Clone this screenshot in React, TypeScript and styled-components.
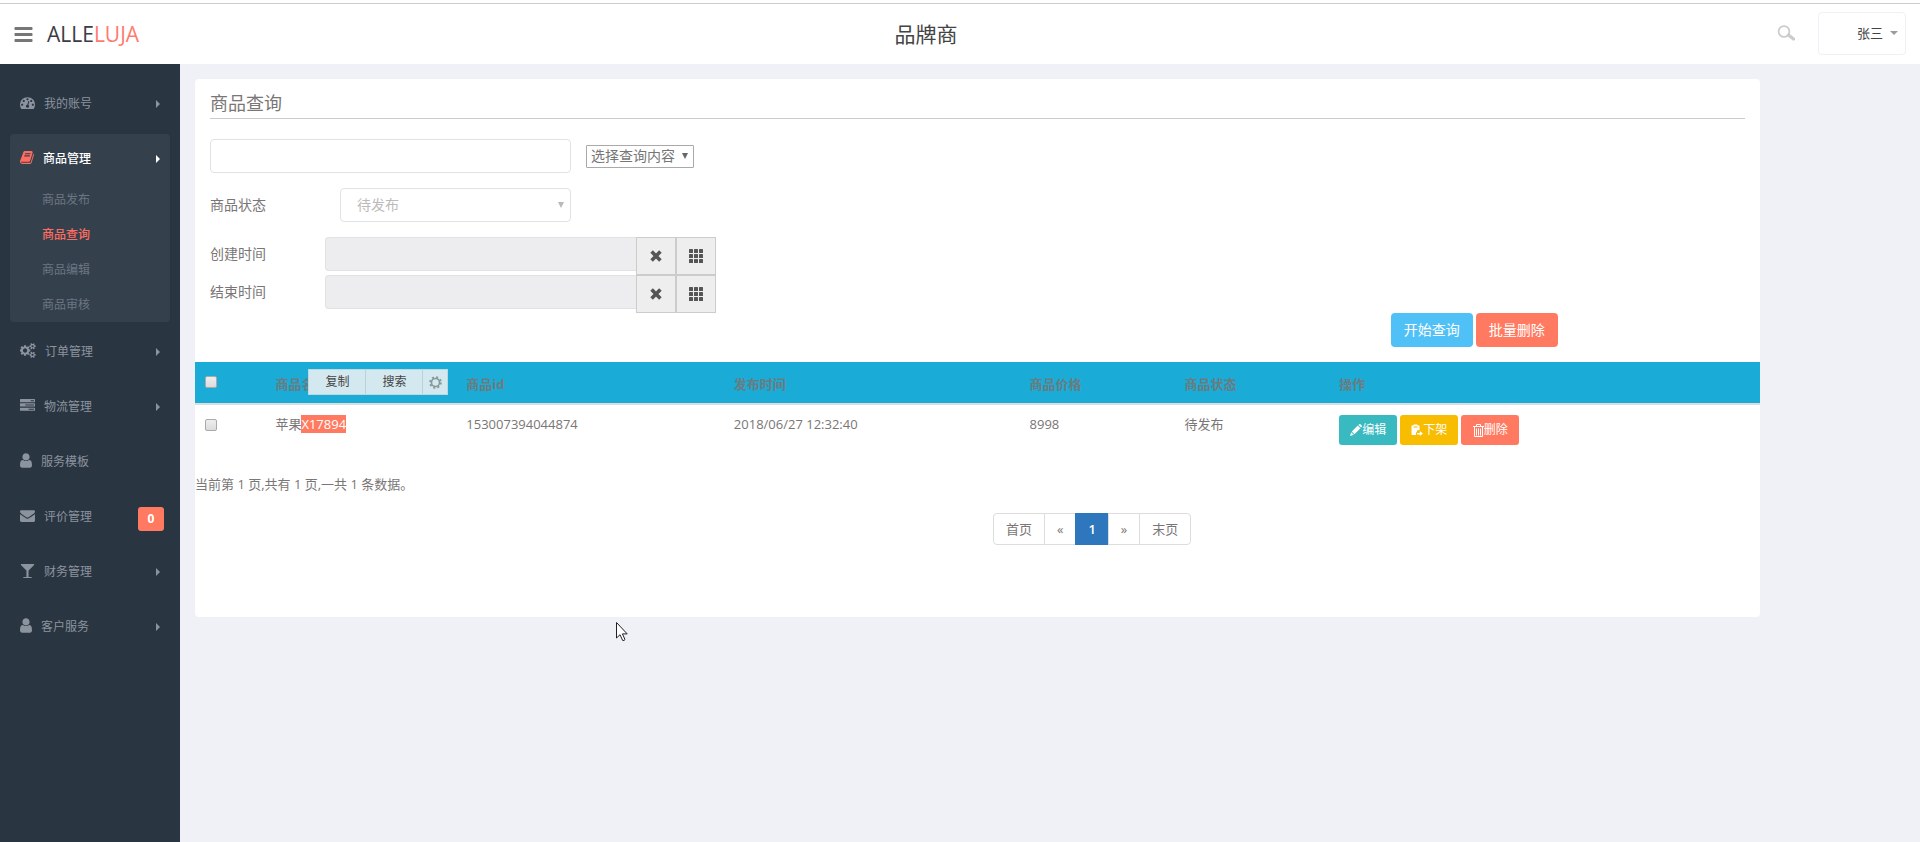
import React from "react";
import styled, { createGlobalStyle, css } from "styled-components";

const GlobalStyle = createGlobalStyle`
  *, *::before, *::after { box-sizing: border-box; }
  body {
    margin: 0;
    background: #f0f1f7;
    color: #7a7676;
    font: 14px/20px "Open Sans", "Noto Sans CJK SC", sans-serif;
  }
  button, input, select { font: inherit; margin: 0; }
  a { color: inherit; text-decoration: none; }
`;

const Page = styled.div`
  min-height: 100vh;
  display: flex;
  flex-direction: column;
  padding-top: 3px;
  background: #fff;
`;

const Header = styled.header`
  height: 61px;
  border-top: 1px solid #ccc;
  display: grid;
  grid-template-columns: 1fr auto 1fr;
  align-items: center;
  padding: 0 14px;
  background: #fff;
`;

const Brand = styled.div`
  display: flex;
  align-items: center;
  gap: 14px;
`;

const IconButton = styled.button`
  display: flex;
  padding: 0;
  border: 0;
  background: none;
  color: #777;
`;

const Logo = styled.a`
  font-size: 21px;
  line-height: 30px;
  font-weight: 400;
  color: #3c3c44;
  span { color: #ff7a70; }
`;

const PageTitle = styled.h1`
  margin: 0;
  padding-right: 68px;
  font-size: 21px;
  line-height: 30px;
  font-weight: 400;
  color: #444;
`;

const HeaderTools = styled.div`
  display: flex;
  justify-content: flex-end;
  align-items: center;
  gap: 23px;
  padding-bottom: 2px;
`;

const UserButton = styled.button`
  display: flex;
  align-items: center;
  justify-content: flex-end;
  gap: 7px;
  width: 88px;
  height: 43px;
  padding: 0 7px;
  border: 1px solid #f0f0f7;
  border-radius: 4px;
  background: #fff;
  color: #444;
  font-size: 13px;
`;

const CaretDown = styled.span`
  border: 4px solid transparent;
  border-top-color: #9a9aa2;
  border-bottom: 0;
`;

const Body = styled.div`
  flex: 1;
  display: flex;
  background: #f0f1f7;
`;

const Sidebar = styled.nav`
  flex: none;
  width: 180px;
  padding: 15px 10px;
  background: #2a3542;
`;

const Menu = styled.ul`
  display: flex;
  flex-direction: column;
  gap: 5px;
  margin: 0;
  padding: 0;
  list-style: none;
`;

const MenuItem = styled.li<{ $active?: boolean }>`
  border-radius: 4px;
  font-size: 12px;
  color: #8b939e;
  ${(p) => p.$active && css`background: #35404d; color: #fff; font-weight: 500;`}
`;

const MenuLink = styled.a`
  display: flex;
  align-items: center;
  height: 50px;
  padding: 0 10px;
  gap: 9px;

  svg { margin-bottom: 3px; }
`;

const MenuLabel = styled.span`
  flex: 1;
`;

const CaretRight = styled.span`
  border: 4px solid transparent;
  border-left-color: currentColor;
  border-right: 0;
`;

const Badge = styled.span`
  width: 26px;
  margin: 4px -4px 0 0;
  border-radius: 3px;
  background: #ff7a60;
  color: #fff;
  font-size: 12px;
  line-height: 24px;
  font-weight: 700;
  text-align: center;
`;

const SubMenu = styled.ul`
  margin: -2px 0 0;
  padding: 0;
  list-style: none;
`;

const SubLink = styled.a<{ $active?: boolean }>`
  display: block;
  padding-left: 32px;
  line-height: 35px;
  font-weight: ${(p) => (p.$active ? 500 : 400)};
  color: ${(p) => (p.$active ? "#ff6c60" : "#6b7682")};
`;

const Main = styled.main`
  flex: 1;
  padding: 15px;
`;

const Card = styled.section`
  width: 91.5%;
  padding-bottom: 72px;
  border-radius: 4px;
  background: #fff;
`;

const CardTitle = styled.h2`
  margin: 0 15px;
  padding: 12px 0 3px;
  border-bottom: 1px solid #ccc;
  font-size: 18px;
  line-height: 24px;
  font-weight: 400;
`;

const SearchForm = styled.form`
  padding: 20px 15px 0;
`;

const FormRow = styled.div`
  display: flex;
  align-items: center;
  gap: 15px;
  margin-bottom: 15px;
`;

const StatusLabel = styled.label`
  width: 115px;
`;

const control = css`
  height: 34px;
  border: 1px solid #e2e2e4;
  border-radius: 4px;
  background: #fff;
  outline: 0;
`;

const KeywordInput = styled.input`
  ${control}
  width: 361px;
  padding: 6px 12px;
`;

const SelectFrame = styled.span`
  position: relative;
  display: inline-flex;
  align-items: center;
`;

const SelectArrow = styled.span<{ $muted?: boolean }>`
  position: absolute;
  right: ${(p) => (p.$muted ? 7 : 6)}px;
  border: 3px solid transparent;
  border-top: 6px solid ${(p) => (p.$muted ? "#b9b9b9" : "#666")};
  border-bottom: 0;
  pointer-events: none;
`;

const FieldSelect = styled.select`
  appearance: none;
  width: 108px;
  height: 23px;
  padding: 0 4px;
  border: 1px solid #a9a9a9;
  border-radius: 1px;
  background: #fff;
  color: #767676;
  line-height: 20px;
`;

const StatusSelect = styled.select`
  ${control}
  appearance: none;
  width: 231px;
  padding: 0 16px;
  color: #bbb;
`;

const DateRow = styled.div`
  display: flex;
  height: 38px;
  align-items: flex-start;
`;

const DateLabel = styled.label`
  width: 115px;
  line-height: 34px;
`;

const DateInput = styled.input`
  ${control}
  width: 311px;
  border-right: 0;
  border-radius: 4px 0 0 4px;
  background: #ededef;
`;

const DateButton = styled.button`
  display: flex;
  align-items: center;
  justify-content: center;
  width: 40px;
  height: 38px;
  padding: 0;
  border: 1px solid #ccc;
  background: #eee;
  color: #555;
`;

const FormActions = styled.div`
  display: flex;
  gap: 3px;
  justify-content: flex-end;
  padding-right: 187px;
`;

const ActionButton = styled.button<{ $color: string }>`
  width: 82px;
  height: 34px;
  padding: 0;
  border: 0;
  border-radius: 4px;
  background: ${(p) => p.$color};
  color: #fff;
`;

const Table = styled.table`
  width: 100%;
  margin-top: 15px;
  border-collapse: collapse;
  table-layout: fixed;
  font-size: 13px;
  line-height: 18px;

  th, td {
    padding: 10px;
    text-align: left;
    vertical-align: top;
  }
  th {
    height: 42px;
    padding-top: 13px;
    padding-bottom: 8px;
    border-bottom: 2px solid #ddd;
    background: #1aacd6;
    color: #6c7b80;
    font-weight: 700;
    white-space: nowrap;
  }
`;

const Check = styled.input`
  appearance: none;
  display: block;
  width: 12px;
  height: 12px;
  border: 1px solid #aaa;
  border-radius: 2px;
  background: linear-gradient(#eee, #dcdcdc);

  th & { margin-top: 1px; }
  td & { margin-top: 4px; }
`;

const NameHead = styled.div`
  position: relative;
`;

const SelectionBar = styled.div`
  position: absolute;
  left: 33px;
  top: -6px;
  display: flex;
  height: 26px;
  border: 1px solid #bcd9e2;
  background: #d4e8f0;
`;

const SelectionButton = styled.button`
  display: flex;
  align-items: center;
  justify-content: center;
  width: 57px;
  padding: 0;
  border: 0;
  border-right: 1px solid #b9d3dc;
  background: none;
  color: #444;
  font-size: 12px;
  font-weight: 400;
  &:last-child { width: 24px; border-right: 0; color: #899; }
`;

const Marked = styled.mark`
  background: #ff7a60;
  color: #fff;
`;

const RowActions = styled.div`
  display: flex;
  gap: 3px;
`;

const RowButton = styled.button<{ $color: string }>`
  display: flex;
  align-items: center;
  justify-content: center;
  width: 58px;
  height: 30px;
  padding: 0;
  border: 0;
  border-radius: 3px;
  background: ${(p) => p.$color};
  color: #fff;
  font-size: 12px;
`;

const Summary = styled.p`
  margin: 20px 0;
  font-size: 13px;
  line-height: 18px;
`;

const Pagination = styled.ul`
  display: flex;
  width: max-content;
  margin: 0 0 0 51%;
  padding: 0 0 0 1px;
  list-style: none;
  font-size: 13px;
`;

const PageLink = styled.a<{ $active?: boolean; $edge?: "left" | "right" }>`
  display: block;
  padding: 0 12px;
  border: 1px solid #ddd;
  margin-left: -1px;
  line-height: 30px;
  ${(p) => p.$edge === "left" && css`border-radius: 4px 0 0 4px;`}
  ${(p) => p.$edge === "right" && css`border-radius: 0 4px 4px 0;`}
  ${(p) => p.$active && css`background: #2e77bc; border-color: #2e77bc; color: #fff; font-weight: 600;`}
`;

const Pointer = styled.svg`
  position: absolute;
  left: 615px;
  top: 621px;
  pointer-events: none;
`;

const paths = {
  bars: "M1664 1344v128q0 26-19 45t-45 19h-1408q-26 0-45-19t-19-45v-128q0-26 19-45t45-19h1408q26 0 45 19t19 45zm0-512v128q0 26-19 45t-45 19h-1408q-26 0-45-19t-19-45v-128q0-26 19-45t45-19h1408q26 0 45 19t19 45zm0-512v128q0 26-19 45t-45 19h-1408q-26 0-45-19t-19-45v-128q0-26 19-45t45-19h1408q26 0 45 19t19 45z",
  user: "M1536 1399q0 109-62.5 187t-150.5 78h-854q-88 0-150.5-78t-62.5-187q0-85 8.5-160.5t31.5-152 58.5-131 94-89 134.5-34.5q131 128 313 128t313-128q76 0 134.5 34.5t94 89 58.5 131 31.5 152 8.5 160.5zm-256-887q0 159-112.5 271.5t-271.5 112.5-271.5-112.5-112.5-271.5 112.5-271.5 271.5-112.5 271.5 112.5 112.5 271.5z",
  envelope: "M1792 710v794q0 66-47 113t-113 47h-1472q-66 0-113-47t-47-113v-794q44 49 101 87 362 246 497 345 57 42 92.5 65.5t94.5 48 110 24.5h2q51 0 110-24.5t94.5-48 92.5-65.5q170-123 498-345 57-39 100-87zm0-294q0 79-49 151t-122 123q-376 261-468 325-10 7-42.5 31t-54 38.5-52 32.5-57.5 27-50 9h-2q-23 0-50-9t-57.5-27-52-32.5-54-38.5-42.5-31q-91-64-262-182.5t-205-142.5q-62-42-117-115.5t-55-136.5q0-78 41.5-130t118.5-52h1472q65 0 112.5 47t47.5 113z",
  glass: "M1699 186q0 35-43 78l-632 632v768h320q26 0 45 19t19 45-19 45-45 19h-896q-26 0-45-19t-19-45 19-45 45-19h320v-768l-632-632q-43-43-43-78 0-23 18-36.5t38-17.5 43-4h1408q23 0 43 4t38 17.5 18 36.5z",
  tasks: "M1024 1408h640v-128h-640v128zm-384-512h1024v-128h-1024v128zm640-512h384v-128h-384v128zm512 832v256q0 26-19 45t-45 19h-1664q-26 0-45-19t-19-45v-256q0-26 19-45t45-19h1664q26 0 45 19t19 45zm0-512v256q0 26-19 45t-45 19h-1664q-26 0-45-19t-19-45v-256q0-26 19-45t45-19h1664q26 0 45 19t19 45zm0-512v256q0 26-19 45t-45 19h-1664q-26 0-45-19t-19-45v-256q0-26 19-45t45-19h1664q26 0 45 19t19 45z",
  gauge: "M384 1152q0-53-37.5-90.5t-90.5-37.5-90.5 37.5-37.5 90.5 37.5 90.5 90.5 37.5 90.5-37.5 37.5-90.5zm192-448q0-53-37.5-90.5t-90.5-37.5-90.5 37.5-37.5 90.5 37.5 90.5 90.5 37.5 90.5-37.5 37.5-90.5zm428 481l101-382q6-26-7.5-48.5t-38.5-29.5-48 6.5-30 39.5l-101 382q-60 5-107 43.5t-63 98.5q-20 77 20 146t117 89 146-20 89-117q16-60-6-117t-72-91zm660-33q0-53-37.5-90.5t-90.5-37.5-90.5 37.5-37.5 90.5 37.5 90.5 90.5 37.5 90.5-37.5 37.5-90.5zm-640-640q0-53-37.5-90.5t-90.5-37.5-90.5 37.5-37.5 90.5 37.5 90.5 90.5 37.5 90.5-37.5 37.5-90.5zm448 192q0-53-37.5-90.5t-90.5-37.5-90.5 37.5-37.5 90.5 37.5 90.5 90.5 37.5 90.5-37.5 37.5-90.5zm320 448q0 261-141 483-19 29-54 29h-1402q-35 0-54-29-141-221-141-483 0-182 71-348t191-286 286-191 348-71 348 71 286 191 191 286 71 348z",
  book: "M1703 478q40 57 18 129l-275 906q-19 64-76.5 107.5t-122.5 43.5h-923q-77 0-148.5-53.5t-99.5-131.5q-24-67-2-127 0-4 3-27t4-37q1-8-3-21.5t-3-19.5q2-11 8-21t16.5-23.5 16.5-23.5q23-38 45-91.5t30-91.5q3-10 .5-30t-.5-28q3-11 17-28t17-23q21-36 42-92t25-90q1-9-2.5-32t.5-28q4-13 22-30.5t22-22.5q19-26 42.5-84.5t27.5-96.5q1-8-3-25.5t-2-26.5q2-8 9-18t18-23 17-21q8-12 16.5-30.5t15-35 16-36 19.5-32 26.5-23.5 36-11.5 47.5 5.5l-1 3q38-9 51-9h761q74 0 114 56t18 130l-274 906q-36 119-71.5 153.5t-128.5 34.5h-869q-27 0-38 15-11 16-1 43 24 70 144 70h923q29 0 56-15.5t35-41.5l300-987q7-22 5-57 38 15 59 43zm-1064 2q-4 13 2 22.5t20 9.5h608q13 0 25.5-9.5t16.5-22.5l21-64q4-13-2-22.5t-20-9.5h-608q-13 0-25.5 9.5t-16.5 22.5zm-83 256q-4 13 2 22.5t20 9.5h608q13 0 25.5-9.5t16.5-22.5l21-64q4-13-2-22.5t-20-9.5h-608q-13 0-25.5 9.5t-16.5 22.5z",
  cogs: "M832 896q0-106-75-181t-181-75-181 75-75 181 75 181 181 75 181-75 75-181zm768 512q0-52-38-90t-90-38-90 38-38 90q0 53 37.5 90.5t90.5 37.5 90.5-37.5 37.5-90.5zm0-1024q0-52-38-90t-90-38-90 38-38 90q0 53 37.5 90.5t90.5 37.5 90.5-37.5 37.5-90.5zm-384 421v185q0 10-7 19.5t-16 10.5l-155 24q-11 35-32 76 34 48 90 115 7 11 7 20 0 12-7 19-23 30-82.5 89.5t-78.5 59.5q-11 0-21-7l-115-90q-37 19-77 31-11 108-23 155-7 24-30 24h-186q-11 0-20-7.5t-10-17.5l-23-153q-34-10-75-31l-118 89q-7 7-20 7-11 0-21-8-144-133-144-160 0-9 7-19 10-14 41-53t47-61q-23-44-35-82l-152-24q-10-1-17-9.5t-7-19.5v-185q0-10 7-19.5t16-10.5l155-24q11-35 32-76-34-48-90-115-7-11-7-20 0-12 7-20 22-30 82-89t79-59q11 0 21 7l115 90q34-18 77-32 11-108 23-154 7-24 30-24h186q11 0 20 7.5t10 17.5l23 153q34 10 75 31l118-89q8-7 20-7 11 0 21 8 144 133 144 160 0 8-7 19-12 16-42 54t-45 60q23 48 34 82l152 23q10 2 17 10.5t7 19.5zm640 533v140q0 16-149 31-12 27-30 52 51 113 51 138 0 4-4 7-122 71-124 71-8 0-46-47t-52-68q-20 2-30 2t-30-2q-14 21-52 68t-46 47q-2 0-124-71-4-3-4-7 0-25 51-138-18-25-30-52-149-15-149-31v-140q0-16 149-31 13-29 30-52-51-113-51-138 0-4 4-7 4-2 35-20t59-34 30-16q8 0 46 46.5t52 67.5q20-2 30-2t30 2q51-71 92-112l6-2q4 0 124 70 4 3 4 7 0 25-51 138 17 23 30 52 149 15 149 31zm0-1024v140q0 16-149 31-12 27-30 52 51 113 51 138 0 4-4 7-122 71-124 71-8 0-46-47t-52-68q-20 2-30 2t-30-2q-14 21-52 68t-46 47q-2 0-124-71-4-3-4-7 0-25 51-138-18-25-30-52-149-15-149-31v-140q0-16 149-31 13-29 30-52-51-113-51-138 0-4 4-7 4-2 35-20t59-34 30-16q8 0 46 46.5t52 67.5q20-2 30-2t30 2q51-71 92-112l6-2q4 0 124 70 4 3 4 7 0 25-51 138 17 23 30 52 149 15 149 31z",
};

type GlyphName = keyof typeof paths;

/* x and w trim the side bearings of the 1792-unit grid */
const Glyph = ({ name, size = 15, x = 0, w = 1792, color = "currentColor" }: {
  name: GlyphName; size?: number; x?: number; w?: number; color?: string;
}) => (
  <svg width={Math.round((size * w) / 1792)} height={size} viewBox={`${x} 0 ${w} 1792`} fill={color} aria-hidden="true">
    <path d={paths[name]} />
  </svg>
);

const SearchIcon = () => (
  <svg width="18" height="16" viewBox="0 0 18 16" fill="none" stroke="#ccc" aria-hidden="true">
    <circle cx="7" cy="6.5" r="5.4" strokeWidth="1.8" />
    <path d="M11.5 10l5 4" strokeWidth="3.2" strokeLinecap="round" />
  </svg>
);

const RemoveIcon = () => (
  <svg width="12" height="12" viewBox="0 0 12 12" aria-hidden="true">
    <path d="M1.6 1.6l8.8 8.8M10.4 1.6l-8.8 8.8" stroke="currentColor" strokeWidth="3.6" />
  </svg>
);

const GridIcon = () => (
  <svg width="14" height="14" viewBox="0 0 14 14" fill="currentColor" aria-hidden="true">
    {[0, 5, 10].map((x) => [0, 5, 10].map((y) => <rect key={`${x}-${y}`} x={x} y={y} width="4" height="4" rx="0.5" />))}
  </svg>
);

const GearIcon = () => (
  <svg width="13" height="13" viewBox="0 0 13 13" fill="none" stroke="currentColor" aria-hidden="true">
    <circle cx="6.5" cy="6.5" r="4" strokeWidth="1.6" />
    <circle cx="6.5" cy="6.5" r="5.4" strokeWidth="1.8" strokeDasharray="2.1 2.14" />
  </svg>
);

const PencilIcon = () => (
  <svg width="12" height="12" viewBox="0 0 12 12" fill="currentColor" aria-hidden="true">
    <path d="M0 12l1.2-3.8 2.6 2.6zM1.8 7.5L7.8 1.5l2.7 2.7-6 6zM8.5.9l.6-.6q.7-.6 1.4 0l1.2 1.2q.6.7 0 1.4l-.6.6z" />
  </svg>
);

const ShelfIcon = () => (
  <svg width="12" height="12" viewBox="0 0 12 12" fill="currentColor" aria-hidden="true">
    <path d="M.5 1.5h1.5L2.8.4h3.4l.8 1.1H8.5V6.2H6v2H5V11H.5zM2.5 2.4v1h4v-1z" fillRule="evenodd" />
    <path d="M6 8.9h2.8V7L12 9.6l-3.2 2.4v-1.6H6z" />
  </svg>
);

const TrashIcon = () => (
  <svg width="11" height="13" viewBox="0 0 11 13" fill="none" stroke="currentColor" aria-hidden="true">
    <path d="M0 2.5h11M3.5 2.5v-2h4v2M1.5 3v9.5h8V3M3.5 4.5v7M5.5 4.5v7M7.5 4.5v7" />
  </svg>
);

const menu: { label: string; icon: React.ReactNode; badge?: number; plain?: boolean; children?: string[] }[] = [
  { label: "我的账号", icon: <Glyph name="gauge" /> },
  {
    label: "商品管理",
    icon: <Glyph name="book" x={64} w={1664} color="#ff6c60" />,
    children: ["商品发布", "商品查询", "商品编辑", "商品审核"],
  },
  { label: "订单管理", icon: <Glyph name="cogs" w={1856} /> },
  { label: "物流管理", icon: <Glyph name="tasks" /> },
  { label: "服务模板", icon: <Glyph name="user" x={256} w={1280} size={17} />, plain: true },
  { label: "评价管理", icon: <Glyph name="envelope" />, badge: 0 },
  { label: "财务管理", icon: <Glyph name="glass" /> },
  { label: "客户服务", icon: <Glyph name="user" x={256} w={1280} size={17} /> },
];

const columns = [
  { label: "", width: "4.5%" },
  { label: "商品名称", width: "12.2%" },
  { label: "商品id", width: "17.1%" },
  { label: "发布时间", width: "18.9%" },
  { label: "商品价格", width: "9.9%" },
  { label: "商品状态", width: "9.9%" },
  { label: "操作", width: "auto" },
];

const DateField = ({ id, label }: { id: string; label: string }) => (
  <DateRow>
    <DateLabel htmlFor={id}>{label}</DateLabel>
    <DateInput id={id} type="text" readOnly />
    <DateButton type="button" aria-label="清除"><RemoveIcon /></DateButton>
    <DateButton type="button" aria-label="选择日期"><GridIcon /></DateButton>
  </DateRow>
);

export default function App() {
  return (
    <>
      <GlobalStyle />
      <Page>
        <Header>
          <Brand>
            <IconButton type="button" aria-label="菜单"><Glyph name="bars" size={21} x={96} w={1600} /></IconButton>
            <Logo href="#">ALLE<span>LUJA</span></Logo>
          </Brand>
          <PageTitle>品牌商</PageTitle>
          <HeaderTools>
            <IconButton type="button" aria-label="搜索"><SearchIcon /></IconButton>
            <UserButton type="button">张三<CaretDown /></UserButton>
          </HeaderTools>
        </Header>
        <Body>
          <Sidebar>
            <Menu>
              {menu.map((item) => (
                <MenuItem key={item.label} $active={!!item.children}>
                  <MenuLink href="#">
                    {item.icon}
                    <MenuLabel>{item.label}</MenuLabel>
                    {item.badge !== undefined ? <Badge>{item.badge}</Badge> : !item.plain && <CaretRight />}
                  </MenuLink>
                  {item.children && (
                    <SubMenu>
                      {item.children.map((child) => (
                        <li key={child}><SubLink href="#" $active={child === "商品查询"}>{child}</SubLink></li>
                      ))}
                    </SubMenu>
                  )}
                </MenuItem>
              ))}
            </Menu>
          </Sidebar>
          <Main>
            <Card>
              <CardTitle>商品查询</CardTitle>
              <SearchForm onSubmit={(e) => e.preventDefault()}>
                <FormRow>
                  <KeywordInput type="text" aria-label="查询内容" />
                  <SelectFrame>
                    <FieldSelect aria-label="选择查询内容"><option>选择查询内容</option></FieldSelect>
                    <SelectArrow />
                  </SelectFrame>
                </FormRow>
                <FormRow>
                  <StatusLabel htmlFor="status">商品状态</StatusLabel>
                  <SelectFrame>
                    <StatusSelect id="status"><option>待发布</option></StatusSelect>
                    <SelectArrow $muted />
                  </SelectFrame>
                </FormRow>
                <DateField id="created" label="创建时间" />
                <DateField id="ended" label="结束时间" />
                <FormActions>
                  <ActionButton $color="#4fc1f7">开始查询</ActionButton>
                  <ActionButton type="button" $color="#ff7a60">批量删除</ActionButton>
                </FormActions>
              </SearchForm>
              <Table>
                <colgroup>{columns.map((c) => <col key={c.label} style={{ width: c.width }} />)}</colgroup>
                <thead>
                  <tr>
                    <th><Check type="checkbox" aria-label="全选" /></th>
                    {columns.slice(1).map((c, i) => (
                      <th key={c.label}>
                        {i === 0 ? (
                          <NameHead>
                            {c.label}
                            <SelectionBar>
                              <SelectionButton type="button">复制</SelectionButton>
                              <SelectionButton type="button">搜索</SelectionButton>
                              <SelectionButton type="button" aria-label="设置"><GearIcon /></SelectionButton>
                            </SelectionBar>
                          </NameHead>
                        ) : c.label}
                      </th>
                    ))}
                  </tr>
                </thead>
                <tbody>
                  <tr>
                    <td><Check type="checkbox" aria-label="选择 苹果X17894" /></td>
                    <td>苹果<Marked>X17894</Marked></td>
                    <td>153007394044874</td>
                    <td>2018/06/27 12:32:40</td>
                    <td>8998</td>
                    <td>待发布</td>
                    <td>
                      <RowActions>
                        <RowButton type="button" $color="#39b9c0"><PencilIcon />编辑</RowButton>
                        <RowButton type="button" $color="#f8bc00"><ShelfIcon />下架</RowButton>
                        <RowButton type="button" $color="#ff7a60"><TrashIcon />删除</RowButton>
                      </RowActions>
                    </td>
                  </tr>
                </tbody>
              </Table>
              <Summary>当前第 1 页,共有 1 页,一共 1 条数据。</Summary>
              <Pagination>
                <li><PageLink href="#" $edge="left">首页</PageLink></li>
                <li><PageLink href="#" aria-label="上一页">«</PageLink></li>
                <li><PageLink href="#" $active>1</PageLink></li>
                <li><PageLink href="#" aria-label="下一页">»</PageLink></li>
                <li><PageLink href="#" $edge="right">末页</PageLink></li>
              </Pagination>
            </Card>
          </Main>
        </Body>
      </Page>
      <Pointer width="14" height="21" viewBox="0 0 14 21" fill="#fff" stroke="#222" aria-hidden="true">
        <path d="M1.5 1.5v15.5l3.5-3.3 2.7 5.8q1.6.3 2.3-1l-2.6-5.600h4.8z" />
      </Pointer>
    </>
  );
}
